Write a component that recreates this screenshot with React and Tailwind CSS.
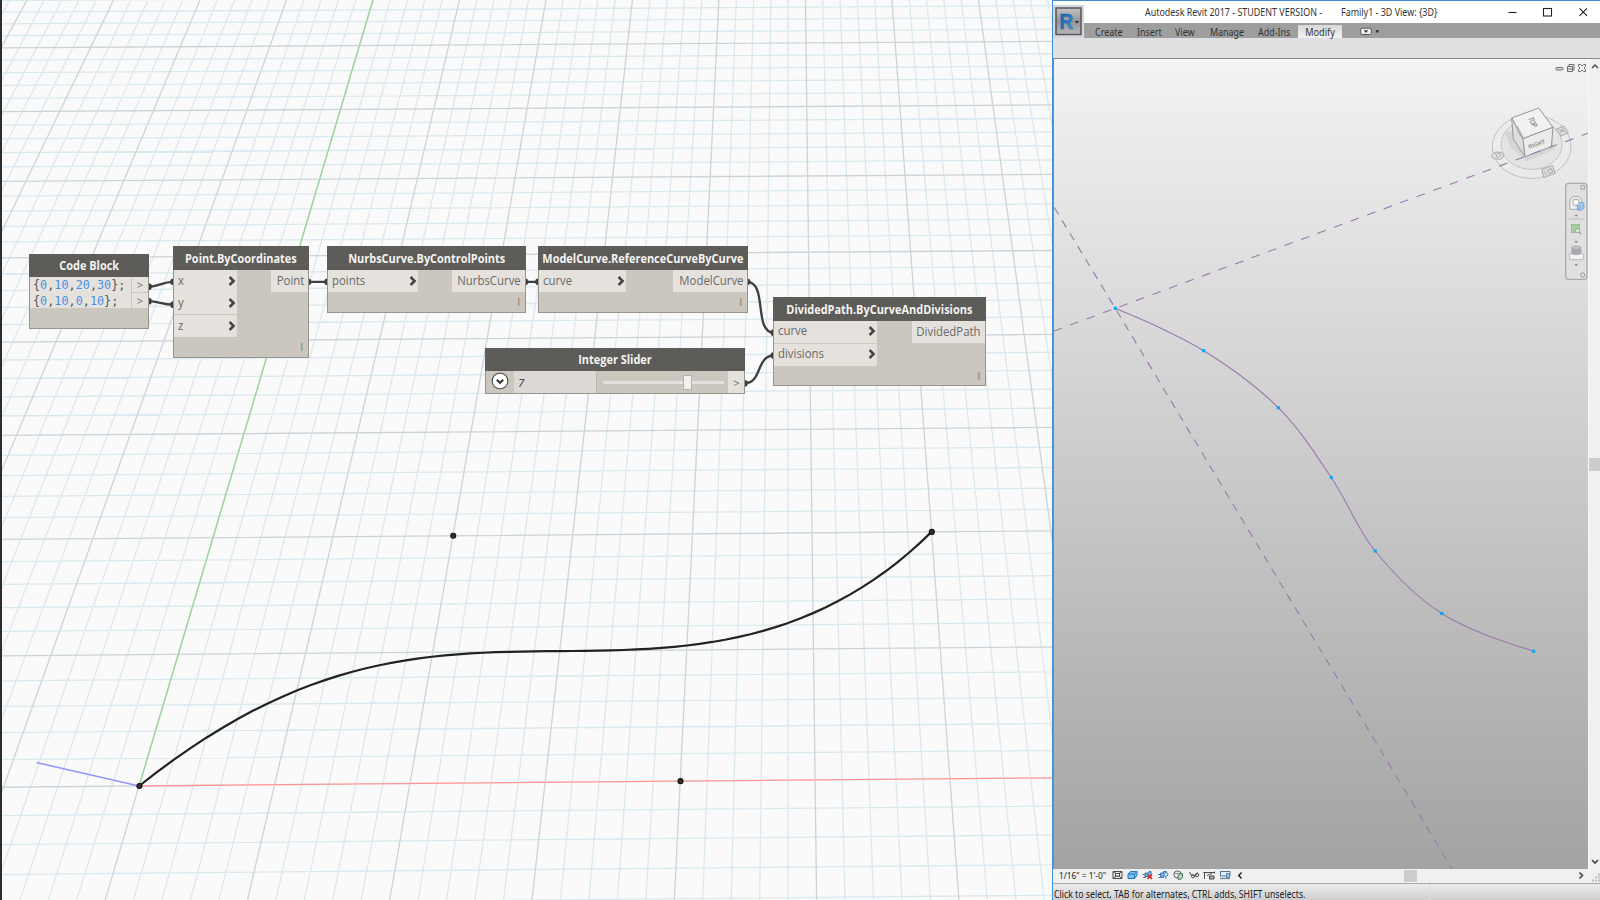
import React from "react";

/* ---------- perspective ground grid ---------- */

const P0 = [139.1, 786];
const P1 = [949.9, 778.7];
const P2 = [895.1, 42.3];
const P3 = [359.4, 45.6];

function buildProjection() {
  const sx = P0[0] - P1[0] + P2[0] - P3[0];
  const sy = P0[1] - P1[1] + P2[1] - P3[1];
  const dx1 = P1[0] - P2[0];
  const dx2 = P3[0] - P2[0];
  const dy1 = P1[1] - P2[1];
  const dy2 = P3[1] - P2[1];
  const det = dx1 * dy2 - dx2 * dy1;
  const g = (sx * dy2 - dx2 * sy) / det;
  const h = (dx1 * sy - sx * dy1) / det;
  const a = P1[0] - P0[0] + g * P1[0];
  const b = P3[0] - P0[0] + h * P3[0];
  const d = P1[1] - P0[1] + g * P1[1];
  const e = P3[1] - P0[1] + h * P3[1];
  return (x, y) => {
    const u = x / 30;
    const v = y / 40;
    const w = g * u + h * v + 1;
    return [(a * u + b * v + P0[0]) / w, (d * u + e * v + P0[1]) / w];
  };
}

const project = buildProjection();

function segment(x1, y1, x2, y2) {
  const p = project(x1, y1);
  const q = project(x2, y2);
  return `M${p[0].toFixed(2)} ${p[1].toFixed(2)}L${q[0].toFixed(2)} ${q[1].toFixed(2)}`;
}

let minorPath = "";
let majorPath = "";
for (let x = -35; x <= 42; x++) {
  const s = segment(x, -7, x, 47);
  if (x % 5 === 0) majorPath += s;
  else minorPath += s;
}
for (let y = -7; y <= 47; y++) {
  const s = segment(-35, y, 42, y);
  if (y % 5 === 0) majorPath += s;
  else minorPath += s;
}

const CONTROL = [[0, 0], [10, 10], [20, 0], [30, 10]];

function curvePath() {
  const out = [];
  for (let i = 0; i <= 60; i++) {
    const t = i / 60;
    const m = 1 - t;
    const w = [m * m * m, 3 * m * m * t, 3 * m * t * t, t * t * t];
    const x = CONTROL.reduce((s, c, k) => s + c[0] * w[k], 0);
    const y = CONTROL.reduce((s, c, k) => s + c[1] * w[k], 0);
    const p = project(x, y);
    out.push(`${p[0].toFixed(2)} ${p[1].toFixed(2)}`);
  }
  return "M" + out.join("L");
}

function Scene() {
  return (
    <svg className="absolute inset-0" width="1052" height="900" viewBox="0 0 1052 900" fill="none">
      <path d={minorPath} stroke="#dae8ef" strokeWidth="1.3" />
      <path d={majorPath} stroke="#cbd4d9" strokeWidth="1.3" />
      <path d={segment(0, 0, 0, 47)} stroke="#fafafa" strokeWidth="1.6" />
      <path d={segment(0, 0, 0, 47)} stroke="#9dd3a0" strokeWidth="1.5" />
      <path d={segment(0, 0, 42, 0)} stroke="#fafafa" strokeWidth="1.6" />
      <path d={segment(0, 0, 42, 0)} stroke="#ff9494" strokeWidth="1.3" />
      <path d="M36.5 762.5L139.1 786" stroke="#9292ff" strokeWidth="1.4" />
      <path d={curvePath()} stroke="#222" strokeWidth="2.2" />
      {CONTROL.map(([x, y]) => {
        const p = project(x, y);
        return (
          <circle key={x} cx={p[0] + 0.3} cy={p[1]} r="2.5" fill="#333" stroke="#111" strokeWidth="1.1" />
        );
      })}
      <rect x="0" y="0" width="2" height="900" fill="#2d2d2f" />
      <g stroke="#403f3e" strokeWidth="2.3">
        <path d="M149 286.7C158 286.7 163 281.8 173 281.8" />
        <path d="M149 301.2C158 301.2 163 304.7 173 304.7" />
        <path d="M308 281.8H328M525 281.8H539" />
        <path d="M747 281.8C768 281.8 753 332.7 774 332.7" />
        <path d="M745 383.3C762 383.3 756 355.5 774 355.5" />
      </g>
      <g fill="#403f3e">
        {[
          [148.5, 286.7], [148.5, 301.2], [173.5, 281.8], [173.5, 304.7], [308, 281.8], [327.5, 281.8],
          [525, 281.8], [538.5, 281.8], [747, 281.8], [774, 332.7], [774, 355.5], [744.5, 383.3],
        ].map(([x, y], i) => (
          <circle key={i} cx={x} cy={y} r="3.4" />
        ))}
      </g>
    </svg>
  );
}

/* ---------- graph nodes ---------- */

function Frame({ place, title, header = "h-[24px]", children }) {
  return (
    <div
      className={`absolute flex flex-col border border-[#98958f] bg-[#cbc6be] font-['Open_Sans','Noto_Sans',sans-serif] ${place}`}
    >
      <div
        className={`-mx-px -mt-px flex shrink-0 items-center justify-center whitespace-nowrap bg-[#5e5c58] text-[12.5px] font-bold leading-none text-[#f4f3f2] ${header}`}
      >
        <span className="scale-x-[0.875]">{title}</span>
      </div>
      {children}
    </div>
  );
}

function Chevron() {
  return (
    <svg className="-mt-px mr-px" width="8" height="10" viewBox="0 0 8 10" fill="none">
      <path d="M1.6 1L5.6 5L1.6 9" stroke="#45443f" strokeWidth="2.5" />
    </svg>
  );
}

function Input({ label, className = "" }) {
  return (
    <div
      className={`flex h-[22px] items-center justify-between bg-[#e5e2dd] pl-1 text-[12.5px] leading-none text-[#6b6966] ${className}`}
    >
      <span className="origin-left scale-x-[0.91]">{label}</span>
      <Chevron />
    </div>
  );
}

function Output({ label, className }) {
  return (
    <div
      className={`flex h-[22px] items-center justify-end bg-[#e5e2dd] pr-1 text-[12.5px] leading-none text-[#6b6966] ${className}`}
    >
      <span className="origin-right scale-x-[0.91]">{label}</span>
    </div>
  );
}

function FunctionNode({ place, title, header = "h-[24px] pt-[3px]", inputs, inputWidth, output, outputWidth }) {
  return (
    <Frame place={place} title={title} header={header}>
      <div className="flex items-start justify-between">
        <div className={`flex flex-col ${inputWidth}`}>{inputs}</div>
        <Output label={output} className={outputWidth} />
      </div>
      <div className="flex grow items-center justify-end pr-[5px] text-[10px] leading-none text-[#77746f]">l</div>
    </Frame>
  );
}

function Num({ children }) {
  return <span className="text-[#4a90e2]">{children}</span>;
}

function CodeBlock() {
  return (
    <Frame place="left-[29px] top-[254px] h-[75px] w-[120px]" title="Code Block" header="h-[23px] pt-[2px]">
      <div className="flex h-[31px] bg-[#e5e2dd]">
        <div className="flex w-[102px] flex-col whitespace-pre border-r border-[#cbc6be] pl-[3px] pt-px font-['DejaVu_Sans_Mono',monospace] text-[11.8px] leading-[15.5px] text-[#55534f]">
          <span>{"{"}<Num>0</Num>,<Num>10</Num>,<Num>20</Num>,<Num>30</Num>{"};"}</span>
          <span>{"{"}<Num>0</Num>,<Num>10</Num>,<Num>0</Num>,<Num>10</Num>{"};"}</span>
        </div>
        <div className="flex grow flex-col text-center text-[11px] text-[#6b6966]">
          <span className="h-[16px] border-b border-[#cbc6be] leading-[16px]">&gt;</span>
          <span className="leading-[15px]">&gt;</span>
        </div>
      </div>
    </Frame>
  );
}

function IntegerSlider() {
  return (
    <Frame place="left-[485px] top-[348px] h-[46px] w-[260px]" title="Integer Slider" header="h-[23px] pt-px">
      <div className="flex grow">
        <div className="flex w-[28px] items-center justify-center">
          <svg className="-mt-[2px]" width="18" height="18" viewBox="0 0 18 18" fill="none">
            <circle cx="9" cy="9" r="7.8" fill="#fff" stroke="#4b4a48" strokeWidth="1.1" />
            <path d="M5.8 7.8L9 10.8L12.2 7.8" stroke="#3a3938" strokeWidth="2.2" />
          </svg>
        </div>
        <div className="flex w-[82px] items-center bg-[#dcd9d4] pl-[4px] pt-px text-[11.5px] italic leading-none text-[#333]">7</div>
        <div className="flex grow items-center border-l border-[#bcb8b0] px-[6px]">
          <div className="h-[3px] w-[80px] bg-[#e4e2de]" />
          <div className="h-[15px] w-[9px] border border-[#b5b2ad] bg-[#f1f0ee]" />
          <div className="-mr-[2px] h-[3px] grow bg-[#e4e2de]" />
        </div>
        <div className="flex w-[16px] items-center justify-center bg-[#e5e2dd] pl-px text-[11px] leading-none text-[#6b6966]">&gt;</div>
      </div>
    </Frame>
  );
}

function DynamoPane() {
  return (
    <main className="relative h-[900px] w-[1052px] shrink-0 overflow-hidden bg-[#fafafa]">
      <Scene />
      <CodeBlock />
      <FunctionNode
        place="left-[173px] top-[246px] h-[112px] w-[136px]"
        title="Point.ByCoordinates"
        inputWidth="w-[63px]"
        outputWidth="w-[37px]"
        output="Point"
        inputs={
          <>
            <Input label="x" />
            <Input label="y" />
            <Input label="z" className="mt-px" />
          </>
        }
      />
      <FunctionNode
        place="left-[327px] top-[246px] h-[67px] w-[199px]"
        title="NurbsCurve.ByControlPoints"
        inputWidth="w-[90px]"
        outputWidth="w-[73px]"
        output="NurbsCurve"
        inputs={<Input label="points" />}
      />
      <FunctionNode
        place="left-[538px] top-[246px] h-[67px] w-[210px]"
        title="ModelCurve.ReferenceCurveByCurve"
        inputWidth="w-[87px]"
        outputWidth="w-[74px]"
        output="ModelCurve"
        inputs={<Input label="curve" />}
      />
      <FunctionNode
        place="left-[773px] top-[297px] h-[89px] w-[213px]"
        title="DividedPath.ByCurveAndDivisions"
        header="h-[24px] pt-[2px]"
        inputWidth="w-[103px]"
        outputWidth="w-[73px]"
        output="DividedPath"
        inputs={
          <>
            <Input label="curve" className="pb-px" />
            <Input label="divisions" className="mt-px pb-[2px]" />
          </>
        }
      />
      <IntegerSlider />
    </main>
  );
}

/* ---------- Revit window ---------- */

const DIVISIONS = [
  [1115.3, 308.3], [1203.7, 350.7], [1278.3, 407.7], [1331.3, 477.5],
  [1375.2, 551], [1441.8, 613.5], [1533.7, 651.3],
];

function splinePath(pts) {
  const tangents = pts.map((p, i) => {
    const a = pts[Math.max(i - 1, 0)];
    const b = pts[Math.min(i + 1, pts.length - 1)];
    return [(b[0] - a[0]) / 2, (b[1] - a[1]) / 2];
  });
  const n = pts.length - 1;
  tangents[0] = [1.5 * (pts[1][0] - pts[0][0]) - tangents[1][0] / 2, 1.5 * (pts[1][1] - pts[0][1]) - tangents[1][1] / 2];
  tangents[n] = [
    1.5 * (pts[n][0] - pts[n - 1][0]) - tangents[n - 1][0] / 2,
    1.5 * (pts[n][1] - pts[n - 1][1]) - tangents[n - 1][1] / 2,
  ];
  let d = `M${pts[0][0]} ${pts[0][1]}`;
  for (let i = 0; i < n; i++) {
    const p = pts[i];
    const q = pts[i + 1];
    d += `C${p[0] + tangents[i][0] / 3} ${p[1] + tangents[i][1] / 3} ${q[0] - tangents[i + 1][0] / 3} ${q[1] - tangents[i + 1][1] / 3} ${q[0]} ${q[1]}`;
  }
  return d;
}

function ViewCube() {
  return (
    <g transform="translate(1460 90) scale(0.33333)">
      <ellipse cx="215" cy="170" rx="118" ry="95" fill="#ebebeb" fillOpacity="0.5" stroke="#b4b4b4" strokeWidth="3" strokeDasharray="9 2" />
      <ellipse cx="215" cy="163" rx="91" ry="75" fill="#e4e4e4" stroke="#b8b8b8" strokeWidth="3" strokeDasharray="9 2" />
      <path d="M135 125L150 170L200 214L285 178L270 120Z" fill="#bdbdbd" opacity="0.4" />
      <g stroke="#979797" strokeWidth="3" strokeLinejoin="round">
        <path d="M155 84L236 54L279 112L189 146Z" fill="#f1f1f1" />
        <path d="M155 84L189 146L195 200L160 147Z" fill="#dedede" />
        <path d="M189 146L279 112L274 170L195 200Z" fill="#ebebeb" />
      </g>
      <g fontFamily="Liberation Sans, sans-serif" fontWeight="bold" fill="#8e8e8e">
        <text transform="translate(203 84) rotate(62) skewX(-18) scale(0.68 1)" fontSize="23">TOP</text>
        <text transform="translate(208 177) rotate(-20) scale(0.95 1)" fontSize="17.5">RIGHT</text>
        <text transform="translate(166 112) rotate(64) scale(0.85 1)" fontSize="13" fill="#a8a8a8">FRONT</text>
      </g>
      <g fill="#dedede" stroke="#a9a9a9" strokeWidth="3">
        <ellipse cx="113" cy="197" rx="18" ry="11" />
        <path d="M106 190L114 204M112 189Q124 190 120 200" />
        <path d="M288 118L312 108L325 128L302 138Z" />
        <path d="M296 120L318 124M300 130L312 114" />
        <path d="M245 238L278 227L285 250L252 263Z" />
        <path d="M253 244L260 257M262 240L274 236L278 247L267 251Z" />
      </g>
    </g>
  );
}

function NavigationBar() {
  return (
    <g transform="translate(1460 90) scale(0.33333)">
      <rect x="317" y="280" width="64" height="288" rx="9" fill="#e0e0e0" stroke="#ababab" strokeWidth="4" />
      <circle cx="368" cy="292" r="6.5" fill="#ddd" stroke="#9c9c9c" strokeWidth="3" />
      <circle cx="368" cy="555" r="6.5" fill="#ddd" stroke="#9c9c9c" strokeWidth="3" />
      <path d="M329 358V338Q329 319 348 319Q366 319 366 338V352Q366 358 348 358Z" fill="#eee" stroke="#a9a9a9" strokeWidth="3" />
      <circle cx="348" cy="337" r="10" fill="#f6f6f6" stroke="#a4a4a4" strokeWidth="3" />
      <path d="M352 344L358 338H372V354L366 361H352Z" fill="#8dbbe6" stroke="#6a9fd2" strokeWidth="2" />
      <path d="M352 344H366V361M366 344L372 338" stroke="#c7dff4" strokeWidth="2" fill="none" />
      <path d="M343 374H354L348.5 380ZM343 453H354L348.5 459ZM343 523H354L348.5 529Z" fill="#808080" />
      <path d="M326 387H372" stroke="#b5b5b5" strokeWidth="2.5" />
      <rect x="334" y="403" width="24" height="25" fill="#a5cc9c" stroke="#8eb585" strokeWidth="2" />
      <circle cx="353" cy="422" r="6" fill="#eee" stroke="#999" strokeWidth="2.5" />
      <path d="M357 426L364 433" stroke="#999" strokeWidth="3.5" />
      <path d="M328 497Q328 491 335 491H365Q371 491 371 497L369 509H330Z" fill="#f5f5f5" stroke="#adadad" strokeWidth="2.5" />
      <path d="M334 473V491Q349 500 364 491V473Z" fill="#a7abaf" />
      <ellipse cx="349" cy="473" rx="15" ry="5" fill="#c4c7ca" stroke="#989ca0" strokeWidth="2" />
    </g>
  );
}

function RevitView() {
  return (
    <svg className="shrink-0" width="534" height="810" viewBox="1054 59 534 810" fill="none">
      <defs>
        <linearGradient id="sky" x1="0" y1="0" x2="0" y2="1">
          <stop offset="0" stopColor="#f3f3f3" />
          <stop offset="1" stopColor="#a3a3a3" />
        </linearGradient>
      </defs>
      <rect x="1054" y="59" width="534" height="810" fill="url(#sky)" />
      <ViewCube />
      <g stroke="#9d78ab" strokeWidth="1.1">
        <path d="M1053.5 331.2L1588 133.2" strokeDasharray="8.8 8.8" />
        <path d="M1054.3 207.5L1115.3 308.3L1452 869" strokeDasharray="8.2 6.85" />
        <path d={splinePath(DIVISIONS)} />
      </g>
      {DIVISIONS.map(([x, y]) => (
        <rect key={x} x={x - 1.6} y={y - 1.6} width="3.2" height="3.2" fill="#0fa5f2" />
      ))}
      <NavigationBar />
      <g stroke="#6c6c6c" strokeWidth="1">
        <rect x="1556" y="67.5" width="7" height="2.5" rx="1" fill="#ddd" />
        <path d="M1567.5 66.5h5v5h-5zM1569 66v-1.5h5v5.5h-1.5" />
        <path d="M1568 69h4" />
        <path d="M1578.5 64.5h2l1.5 1.5l1.5-1.5h2v2l-1.5 1.5l1.5 1.5v2h-2l-1.5-1.5l-1.5 1.5h-2v-2l1.5-1.5l-1.5-1.5z" />
      </g>
    </svg>
  );
}

function TitleBar() {
  return (
    <div className="flex h-[22px] items-center bg-white pl-[92px] text-[10.5px] leading-none text-[#333]">
      <span className="w-[196px] shrink-0 origin-left scale-x-[0.85] whitespace-nowrap">Autodesk Revit 2017 - STUDENT VERSION -</span>
      <span className="w-[156px] shrink-0 origin-left scale-x-[0.85] whitespace-nowrap">Family1 - 3D View: {"{3D}"}</span>
      <svg className="shrink-0" width="104" height="22" viewBox="1496 1 104 22" fill="none" stroke="#222" strokeWidth="1.1">
        <path d="M1507.500 12.500h8" />
        <rect x="1542.500" y="8.500" width="8" height="7.500" />
        <path d="M1578.500 8.300l7.500 7.500M1586 8.300l-7.500 7.500" />
      </svg>
    </div>
  );
}

const TABS = [
  ["Create", "w-[42px]"],
  ["Insert", "w-[37.5px]"],
  ["View", "w-[35px]"],
  ["Manage", "w-[48.5px]"],
  ["Add-Ins", "w-[40px]"],
];

function Tabs() {
  return (
    <div className="flex h-[15px] items-end bg-[#9e9e9e] pl-[42px] text-[10.5px] leading-[12px] text-[#333]">
      {TABS.map(([label, width]) => (
        <span key={label} className={`shrink-0 origin-left scale-x-[0.85] whitespace-nowrap ${width}`}>{label}</span>
      ))}
      <span className="flex h-[13px] w-[44px] shrink-0 items-end justify-center bg-gradient-to-b from-[#d8d8d8] to-[#f2f2f2] leading-[12px]">
        <span className="scale-x-[0.87]">Modify</span>
      </span>
      <svg className="ml-[18px]" width="22" height="15" viewBox="0 0 22 15">
        <rect x="0.7" y="5.2" width="10.6" height="6.3" rx="1.8" fill="#f0f0f0" stroke="#555" />
        <path d="M3.8 7.3h4.4L6 10z" fill="#333" />
        <path d="M15.5 7.3h3.6L17.3 10.2z" fill="#222" />
      </svg>
    </div>
  );
}

function AppButton() {
  return (
    <div className="absolute left-0 top-[4px] flex h-[33px] w-[31px] items-center justify-center bg-[#d6d7dc]">
      <svg width="27" height="29" viewBox="0 0 27 29">
        <defs>
          <linearGradient id="btn" x1="0" y1="0" x2="0" y2="1">
            <stop offset="0" stopColor="#c3c3c3" />
            <stop offset="0.5" stopColor="#959595" />
            <stop offset="1" stopColor="#b8b8b8" />
          </linearGradient>
          <linearGradient id="logo" x1="0" y1="0" x2="1" y2="1">
            <stop offset="0" stopColor="#1b4f94" />
            <stop offset="0.55" stopColor="#2a77c4" />
            <stop offset="1" stopColor="#5aaee6" />
          </linearGradient>
        </defs>
        <rect x="1" y="1" width="25" height="26.5" fill="url(#btn)" stroke="#555" strokeWidth="1.5" />
        <text transform="translate(4.4 21.6) scale(0.86 1)" fontFamily="Liberation Sans, sans-serif" fontWeight="bold" fontSize="22" fill="url(#logo)" stroke="#2568ae" strokeWidth="0.6">R</text>
        <path d="M19.8 14h4.4l-2.2 2.6z" fill="#333" />
      </svg>
    </div>
  );
}

function ViewControls() {
  return (
    <svg className="ml-[4px] shrink-0" width="140" height="14" viewBox="1110 869 140 14" fill="none" stroke="#4a4a4a" strokeWidth="1">
      <path d="M1113 871.5h9v7h-9zM1113 871.5l3 2h3l3-2M1113 878.5l3-2.5h3l3 2.5" />
      <rect x="1115.5" y="873.5" width="4" height="2.5" fill="#fff" />
      <path d="M1128 874l2.5-2.5h6.5v4l-2.5 3h-6.5z" fill="#7fc0ef" stroke="#2378bd" />
      <path d="M1128 874h6.5v4.5M1134.5 874l2.5-2.5" stroke="#2378bd" />
      <path d="M1145 873h4v-1.5h2v5h-6zM1142.5 874.5h2.5M1143 877.5h3" fill="#79b5e4" stroke="#3f78ad" />
      <path d="M1147.5 874.5l4.5 4.5M1152 874.5l-4.5 4.5" stroke="#d82c20" strokeWidth="1.7" />
      <path d="M1160.5 873h3v-1.5h3v3.5h-3v2.5h-3zM1158 874.5h2.5M1158.5 877.5h2" fill="#79b5e4" stroke="#3f78ad" />
      <circle cx="1165.8" cy="874.5" r="2" fill="#c9e3f6" stroke="#4a86bd" />
      <path d="M1165.8 876.5v2.5" stroke="#4a86bd" />
      <circle cx="1177.5" cy="874.5" r="3.6" fill="#ececec" stroke="#5c5c5c" />
      <path d="M1174.5 873.5h5.5" stroke="#8a8a8a" />
      <path d="M1178 875.5l2-1.8h2.5v4l-1.5 1.5h-3z" fill="#b5d8be" stroke="#4f6a5b" />
      <path d="M1189.5 872l1.5 3h2l2 1.5l2.5-4" />
      <circle cx="1193" cy="876.3" r="1.5" /><circle cx="1197" cy="875" r="1.7" />
      <path d="M1204.5 879v-7M1203.5 872.5h11M1207 875.5l5-2M1214.5 871.5v2" />
      <path d="M1209.5 876h4.5v3h-4.5z" fill="#aaa" />
      <path d="M1220.5 871.5h9.5v4.5h-9.5z" fill="#e3edf5" stroke="#577186" />
      <path d="M1220 878.5h10" stroke="#6f7d88" strokeWidth="1.2" />
      <rect x="1226.5" y="873.5" width="3" height="4" fill="#8fc0e8" stroke="#4c87b7" strokeWidth="0.8" />
      <path d="M1241.5 872.5l-2.8 3l2.8 3" stroke="#222" strokeWidth="1.4" />
    </svg>
  );
}

function RevitWindow() {
  return (
    <section className="relative flex h-[900px] grow flex-col border-l border-t border-[#3f8fd6] bg-[#f0f0f0] font-['Noto_Sans','Open_Sans',sans-serif]">
      <TitleBar />
      <Tabs />
      <div className="h-[20px] bg-[#dfe0e2]" />
      <div className="flex h-[811px] border-l border-t border-[#8a8a8a]">
        <RevitView />
        <div className="flex grow flex-col items-center justify-between border-l border-[#f8f8f8] bg-[#f0f0f0] py-1">
          <svg width="8" height="6" viewBox="0 0 8 6" fill="none" className="mr-px">
            <path d="M1 5L4 2L7 5" stroke="#444" strokeWidth="1.4" />
          </svg>
          <div className="h-[13px] w-[12px] bg-[#cdcdcd]" />
          <svg width="8" height="6" viewBox="0 0 8 6" fill="none" className="mr-px">
            <path d="M1 1L4 4L7 1" stroke="#444" strokeWidth="1.6" />
          </svg>
        </div>
      </div>
      <div className="flex h-[14px] shrink-0 items-center bg-[#f0f0f0] pl-[6px] text-[9px] leading-none text-[#222]">
        <span className="w-[47px] shrink-0 origin-left -translate-y-px scale-x-[0.92] whitespace-nowrap">1/16" = 1'-0"</span>
        <ViewControls />
        <svg className="shrink-0" width="350" height="14" viewBox="1250 869 350 14" fill="none">
          <rect x="1404" y="870" width="13" height="12" fill="#cdcdcd" />
          <path d="M1579.5 872.5l3 3l-3 3" stroke="#444" strokeWidth="1.6" />
          <path d="M1598 873.5h2v2h-2zM1595 876.5h2v2h-2zM1598 876.5h2v2h-2zM1592 879.5h2v2h-2zM1595 879.5h2v2h-2zM1598 879.5h2v2h-2z" fill="#bdbdbd" />
        </svg>
      </div>
      <div className="flex grow items-center overflow-hidden border-t border-[#a9a9a9] bg-gradient-to-b from-[#ececec] to-[#cfcfcf] pl-px text-[10.5px] leading-none text-[#222]">
        <span className="w-[375px] shrink-0 origin-left scale-x-[0.83] whitespace-nowrap pt-[4px]">Click to select, TAB for alternates, CTRL adds, SHIFT unselects.</span>
        <span className="h-[16px] w-px bg-[#d9d9d9]" />
      </div>
      <AppButton />
    </section>
  );
}

export default function App() {
  return (
    <div className="flex h-[900px] w-[1600px] overflow-hidden">
      <DynamoPane />
      <RevitWindow />
    </div>
  );
}
